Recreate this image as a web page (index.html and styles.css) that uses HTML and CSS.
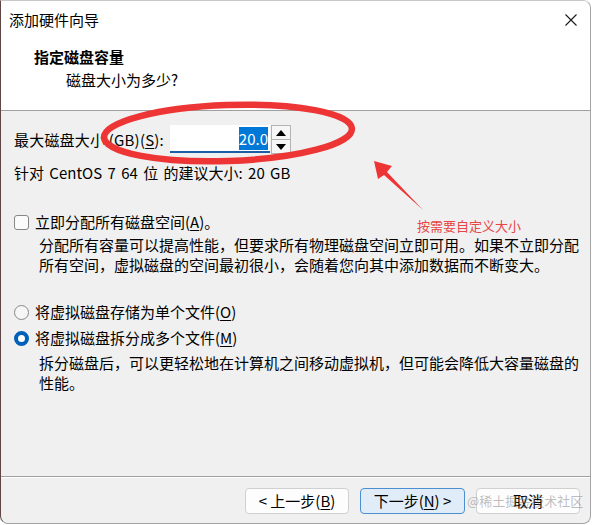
FILE: index.html
```html
<!DOCTYPE html>
<html>
<head>
    <meta charset="utf-8">
    <title>添加硬件向导</title>
    <link rel="stylesheet" href="styles.css">
</head>
<body>
    <div class="window">
        <div class="titlebar">
            <span class="title">添加硬件向导</span>
            <svg class="close" width="12" height="12" viewBox="0 0 12 12">
                <path d="M0.5 0.5 L11.5 11.5 M11.5 0.5 L0.5 11.5" stroke="#1a1a1a" stroke-width="1.1" fill="none"/>
            </svg>
        </div>
        <div class="header">
            <h1>指定磁盘容量</h1>
            <p>磁盘大小为多少?</p>
        </div>
        <div class="content">
            <div class="size-row">
                <span class="label">最大磁盘大小 (GB)(<u>S</u>):</span>
                <div class="spinbox">
                    <div class="value"><span class="selected">20.0</span></div>
                    <div class="spin-btns">
                        <span class="spin-btn"><i class="up"></i></span>
                        <span class="spin-btn"><i class="down"></i></span>
                    </div>
                </div>
            </div>
            <p class="hint">针对 CentOS 7 64 位 的建议大小: 20 GB</p>

            <div class="option option-first">
                <span class="checkbox"></span>
                <span>立即分配所有磁盘空间(<u>A</u>)。</span>
            </div>
            <p class="desc">分配所有容量可以提高性能，但要求所有物理磁盘空间立即可用。如果不立即分配所有空间，虚拟磁盘的空间最初很小，会随着您向其中添加数据而不断变大。</p>

            <div class="option option-gap">
                <span class="radio"></span>
                <span>将虚拟磁盘存储为单个文件(<u>O</u>)</span>
            </div>
            <div class="option">
                <span class="radio checked"></span>
                <span>将虚拟磁盘拆分成多个文件(<u>M</u>)</span>
            </div>
            <p class="desc desc-last">拆分磁盘后，可以更轻松地在计算机之间移动虚拟机，但可能会降低大容量磁盘的性能。</p>
        </div>
        <div class="footer">
            <button class="btn">&lt; 上一步(<u>B</u>)</button>
            <button class="btn btn-default">下一步(<u>N</u>) &gt;</button>
            <button class="btn">取消</button>
        </div>

        <svg class="annotation" width="592" height="525" viewBox="0 0 592 525">
            <ellipse cx="228" cy="133" rx="124" ry="28" transform="rotate(-2 228 133)"
                     fill="none" stroke="#ee3535" stroke-width="6.5"/>
            <polygon points="374,161 392,166 387,172 423,210 384,175 378,179" fill="#ee3535"/>
        </svg>
        <span class="note">按需要自定义大小</span>
        <span class="watermark">@稀土掘金技术社区</span>
    </div>
</body>
</html>
```

FILE: styles.css
```css
* {
    box-sizing: border-box;
    margin: 0;
    padding: 0;
}

body {
    background: #ffffff;
    font-family: 'Noto Sans CJK SC', 'Noto Sans', sans-serif;
    font-size: 15px;
    color: #000;
}

u {
    text-decoration: underline;
    text-underline-offset: 2px;
}

.window {
    position: relative;
    width: 591px;
    height: 524px;
    background: #f0f0f0;
    border: 1px solid #a3a3a3;
    border-left-color: #5e4646;
    border-top-color: #c8c8c8;
    border-radius: 0 8px 8px 8px;
    display: flex;
    flex-direction: column;
    overflow: hidden;
}

.titlebar {
    height: 39px;
    background: #fff;
    display: flex;
    align-items: center;
    justify-content: space-between;
    padding: 0 13px 2px 8px;
}

.title {
    line-height: 20px;
}

.header {
    background: #fff;
    height: 71px;
    padding-top: 5px;
    border-bottom: 1px solid #a0a0a0;
}

.header h1 {
    font-size: 15px;
    font-weight: bold;
    line-height: 23px;
    padding-left: 33px;
}

.header p {
    line-height: 23px;
    padding-left: 65px;
}

.content {
    flex: 1;
    padding: 14px 6px 0 13px;
}

.size-row {
    display: flex;
    align-items: center;
    height: 29px;
}

.label {
    line-height: 20px;
    width: 156px;
    letter-spacing: 0.2px;
}

.spinbox {
    display: flex;
    height: 29px;
}

.value {
    width: 100px;
    height: 28px;
    background: #fff;
    border-bottom: 2px solid #1b5ea8;
    text-align: right;
    padding: 3px 2px 0 0;
    line-height: 21px;
}

.selected {
    background: #0078d7;
    color: #fff;
    padding: 1px 0;
}

.spin-btns {
    margin-left: 1px;
    width: 20px;
    border: 1px solid #b4b4b4;
    display: flex;
    flex-direction: column;
    background: #f6f6f6;
}

.spin-btn {
    flex: 1;
    display: flex;
    align-items: center;
    justify-content: center;
}

.spin-btn + .spin-btn {
    border-top: 1px solid #b4b4b4;
}

.spin-btn i {
    width: 0;
    height: 0;
    border-left: 5px solid transparent;
    border-right: 5px solid transparent;
}

.spin-btn .up {
    border-bottom: 6px solid #000;
}

.spin-btn .down {
    border-top: 6px solid #000;
}

.hint {
    margin-top: 9px;
    line-height: 20px;
    word-spacing: 2px;
}

.option {
    display: flex;
    align-items: center;
    gap: 6px;
    line-height: 20px;
    margin-top: 6px;
}

.option-first {
    margin-top: 29px;
}

.option-gap {
    margin-top: 27px;
}

.checkbox {
    width: 15px;
    height: 15px;
    border: 1px solid #878787;
    border-radius: 3px;
    background: #fbfbfb;
}

.radio {
    width: 15px;
    height: 15px;
    border: 1px solid #878787;
    border-radius: 50%;
    background: #f6f6f6;
}

.radio.checked {
    border: 4.5px solid #005fb8;
    background: #fff;
}

.desc {
    margin: 3px 0 0 25px;
    line-height: 20px;
}

.desc-last {
    margin-top: 5px;
}

.footer {
    height: 47px;
    border-top: 1px solid #a0a0a0;
    box-shadow: inset 0 1px #fff;
    display: flex;
    justify-content: flex-end;
    gap: 11px;
    padding: 11px 10px 0 0;
}

.btn {
    width: 104px;
    height: 26px;
    font-family: inherit;
    font-size: 15px;
    line-height: 20px;
    background: #fdfdfd;
    border: 1px solid #d0d0d0;
    border-radius: 4px;
    color: #000;
}

.btn-default {
    width: 105px;
    background: #e0ecf8;
    border-color: #4c8fd0;
}

.annotation {
    position: absolute;
    left: -1px;
    top: -1px;
    pointer-events: none;
}

.note {
    position: absolute;
    left: 416px;
    top: 216px;
    font-size: 13px;
    line-height: 18px;
    color: #e84545;
}

.watermark {
    position: absolute;
    left: 466px;
    top: 491px;
    font-size: 13px;
    line-height: 18px;
    color: rgba(110, 110, 110, 0.45);
}
```
